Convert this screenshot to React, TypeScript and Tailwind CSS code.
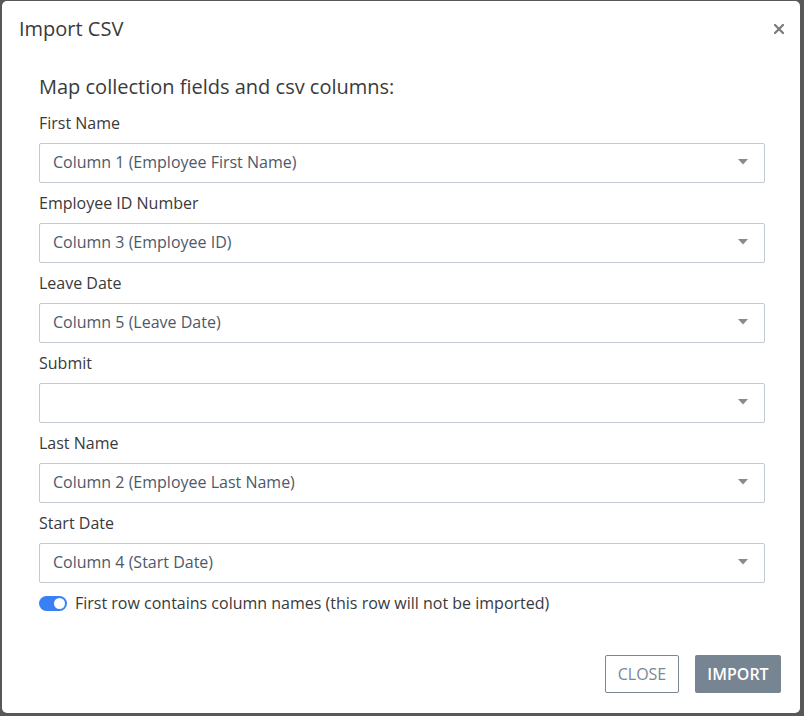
import React from "react";

const fields = [
  { label: "First Name", value: "Column 1 (Employee First Name)" },
  { label: "Employee ID Number", value: "Column 3 (Employee ID)" },
  { label: "Leave Date", value: "Column 5 (Leave Date)" },
  { label: "Submit", value: "" },
  { label: "Last Name", value: "Column 2 (Employee Last Name)" },
  { label: "Start Date", value: "Column 4 (Start Date)" },
];

function Caret() {
  return (
    <svg width="10" height="6" viewBox="0 0 10 6" className="shrink-0">
      <path d="M0 0 L10 0 L5 5.5 Z" fill="#8a8a8a" />
    </svg>
  );
}

export default function App() {
  return (
    <div
      className="w-[804px] h-[716px] bg-[#585858] pt-[1px] pl-[2px] pr-[4px] pb-[3px]"
      style={{ fontFamily: '"Open Sans", "Liberation Sans", sans-serif' }}
    >
      <div className="w-full h-full bg-white rounded-[5px] flex flex-col">
        <div className="flex items-start justify-between pl-[17px] pr-[16px] pt-[14px] h-[56px]">
          <div className="text-[20px] leading-[28px] text-[#3a3a3a]">Import CSV</div>
          <svg width="10" height="10" viewBox="0 0 10 10" className="mt-[9px]">
            <path d="M1 1 L9 9 M9 1 L1 9" stroke="#7a7a7a" strokeWidth="2.2" strokeLinecap="square" />
          </svg>
        </div>
        <div className="pl-[37px] pr-[35px] pt-[16px]">
          <div className="text-[20px] leading-[28px] text-[#3a3a3a] mb-[10px]">
            Map collection fields and csv columns:
          </div>
          {fields.map((f) => (
            <div key={f.label} className="mb-[8px]">
              <div className="text-[16px] leading-[24px] text-[#3a3a3a] mb-[8px]">{f.label}</div>
              <div className="h-[40px] border border-[#c2c9d1] rounded-[2px] flex items-center justify-between pl-[13px] pr-[16px] pb-[2px]">
                <span className="text-[16px] leading-[24px] text-[#4d596b]">{f.value}</span>
                <Caret />
              </div>
            </div>
          ))}
          <div className="flex items-center gap-[8px] h-[24px]">
            <div className="w-[28px] h-[15px] rounded-full bg-[#3a80f5] flex items-center justify-end pr-[2px]">
              <div className="w-[11px] h-[11px] rounded-full bg-white" />
            </div>
            <span className="text-[16px] leading-[24px] text-[#3a3a3a]">
              First row contains column names (this row will not be imported)
            </span>
          </div>
        </div>
        <div className="mt-auto flex justify-end gap-[16px] pr-[19px] pb-[20px]">
          <button className="w-[74px] h-[38px] border border-[#7b8793] rounded-[2px] text-[16px] text-[#7a8795] bg-white">
            CLOSE
          </button>
          <button className="w-[86px] h-[38px] rounded-[2px] text-[16px] font-semibold text-white bg-[#778491]">
            IMPORT
          </button>
        </div>
      </div>
    </div>
  );
}
